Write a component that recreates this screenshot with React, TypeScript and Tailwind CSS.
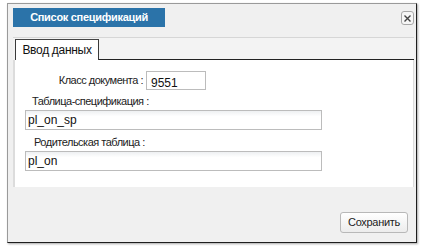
import React from "react";

const font = { fontFamily: '"Liberation Sans", Tahoma, Arial, sans-serif' };

export default function App() {
  return (
    <div className="w-[423px] h-[250px] bg-white pt-[3px] pl-[7px]" style={font}>
      <div className="w-[410px] h-[240px] bg-[#f0f0f0] border border-t-[#9a9a9a] border-l-[#9a9a9a] border-r-[#1e1e1e] border-b-[#1e1e1e] shadow-[1px_1px_2px_rgba(0,0,0,0.35)] flex flex-col">
        {/* header */}
        <div className="h-[33px] flex items-start pl-[5px] pt-[4px] pr-[2px]">
          <div className="w-[152px] h-[19px] bg-[#2b73a9] flex items-center justify-center text-white text-[11px] font-bold tracking-[-0.3px]">
            Список спецификаций
          </div>
          <div className="flex-1" />
          <div className="mt-[3px] w-[13px] h-[14px] rounded-[3px] border border-[#a8a8a8] bg-[#f6f6f6] flex items-center justify-center">
            <svg width="9" height="9" viewBox="0 0 9 9">
              <path d="M1.5 1.5 L7.5 7.5 M7.5 1.5 L1.5 7.5" stroke="#444" strokeWidth="1.4" />
            </svg>
          </div>
        </div>
        {/* tab strip */}
        <div className="ml-[5px] mr-[2px] h-[23px] border-t border-[#d6d6d6] bg-[#f3f3f3] flex items-end">
          <div className="h-[21px] ml-[2px] w-[84px] bg-white border border-b-0 border-[#3a3a3a] border-t-[#444] flex items-center justify-center text-[12px] text-[#111] tracking-[-0.3px]">
            Ввод данных
          </div>
          <div className="flex-1 h-[1px] bg-[#222]" />
        </div>
        {/* panel */}
        <div className="ml-[5px] mr-[2px] h-[127px] bg-white border-l-[2px] border-r border-[#dcdcdc] relative">
          <div className="flex items-center pt-[11px]">
            <div className="w-[131px] text-right text-[11px] text-[#222] pr-[3px] tracking-[-0.5px]">Класс документа :</div>
            <div className="w-[60px] h-[19px] border border-[#bcbcbc] bg-white text-[12px] text-[#111] pl-[4px] pt-[4px] leading-[14px]">9551</div>
          </div>
          <div className="pl-[17px] pt-[5px] text-[11px] text-[#222] leading-[13px] tracking-[-0.5px]">Таблица-спецификация :</div>
          <div className="ml-[10px] mt-[2px] w-[297px] h-[20px] border border-[#bcbcbc] bg-gradient-to-b from-[#eef0f2] to-white to-[30%] text-[12px] text-[#111] pl-[2px] leading-[18px]">pl_on_sp</div>
          <div className="pl-[19px] pt-[6px] text-[11px] text-[#222] leading-[13px] tracking-[-0.5px]">Родительская таблица :</div>
          <div className="ml-[10px] mt-[2px] w-[297px] h-[20px] border border-[#bcbcbc] bg-gradient-to-b from-[#eef0f2] to-white to-[30%] text-[12px] text-[#111] pl-[2px] leading-[18px]">pl_on</div>
        </div>
        {/* footer */}
        <div className="flex-1 flex justify-end items-start pt-[25px] pr-[8px]">
          <div className="w-[68px] h-[21px] rounded-[3px] border border-[#b8b8b8] bg-gradient-to-b from-white to-[#ececec] flex items-center justify-center text-[11px] text-[#222] tracking-[-0.3px]">
            Сохранить
          </div>
        </div>
      </div>
    </div>
  );
}
